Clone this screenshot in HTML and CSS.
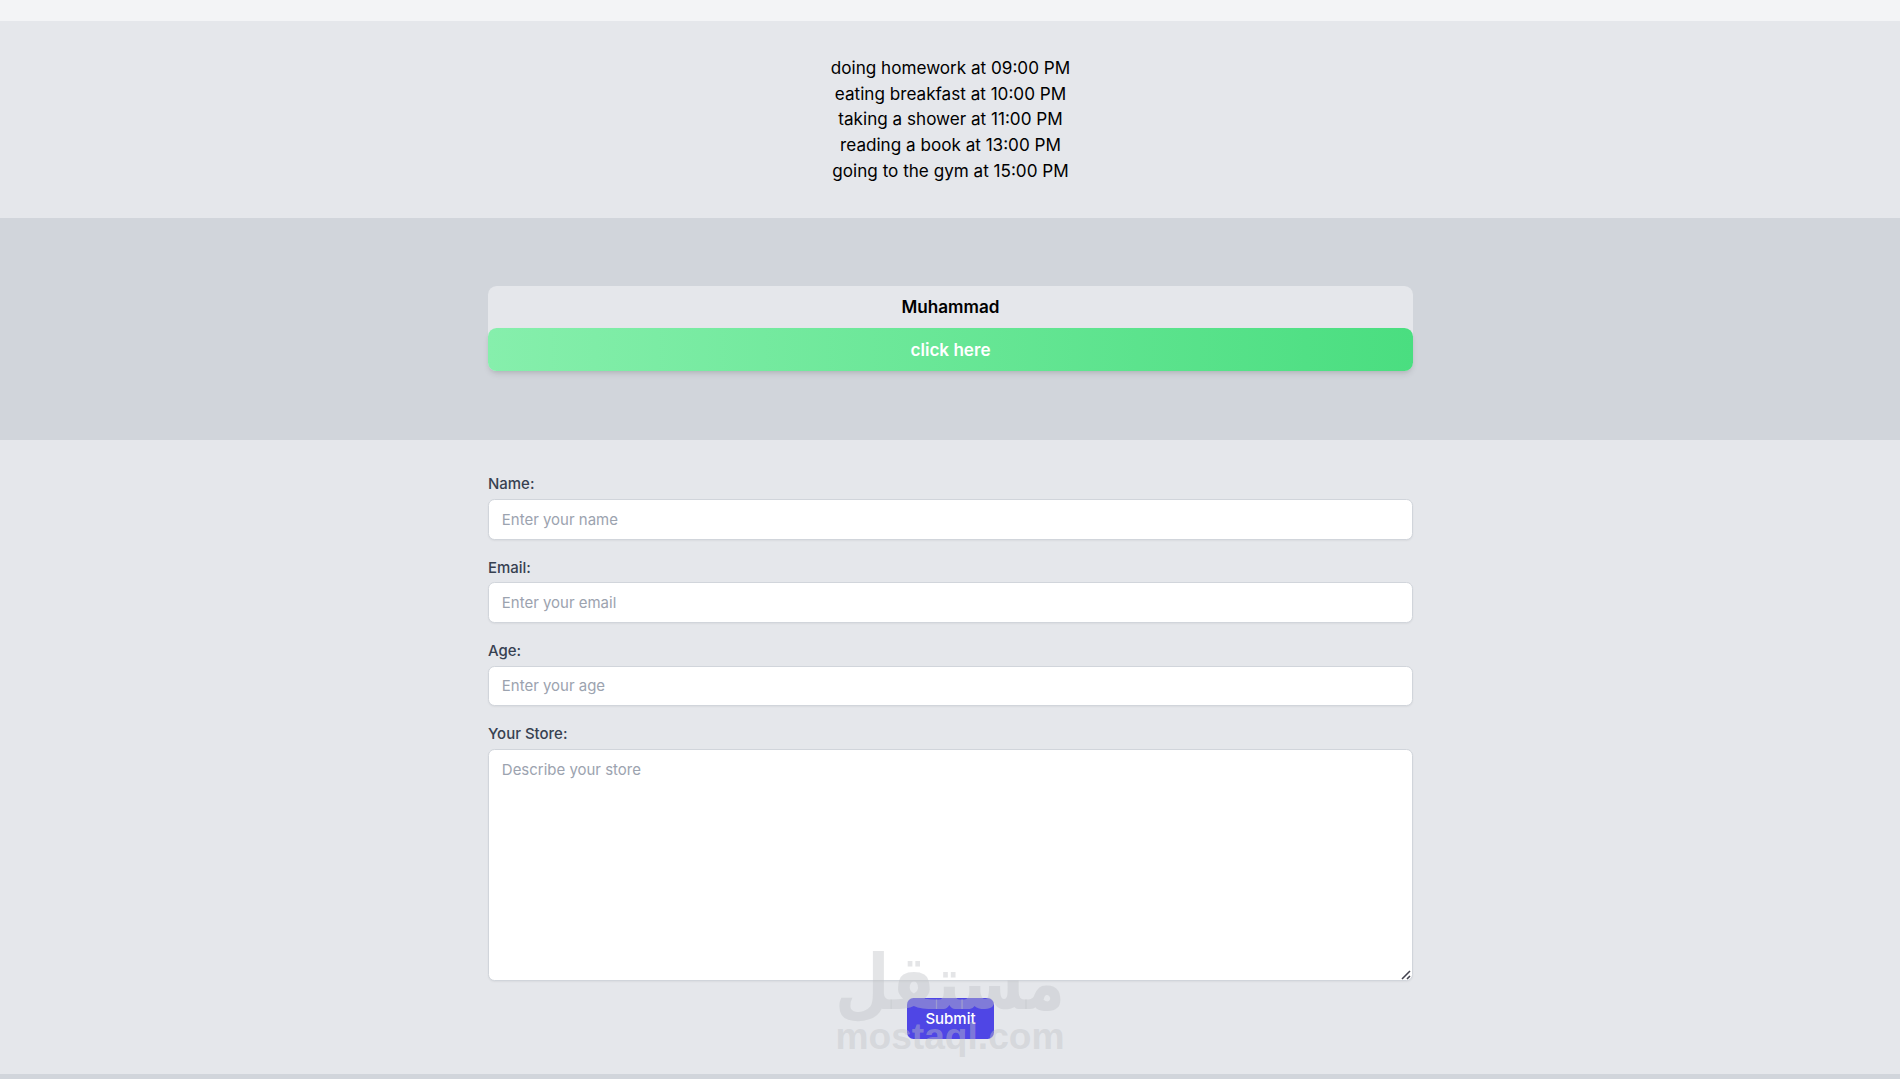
FILE: index.html
```
<!DOCTYPE html>
<html lang="en">
<head>
  <meta charset="UTF-8" />
  <meta name="viewport" content="width=device-width, initial-scale=1" />
  <title>My Store</title>
  <link rel="stylesheet" href="styles.css">
</head>
<body>
  <!-- Daily tasks -->
  <section class="tasks">
    <p>doing homework at 09:00 PM</p>
    <p>eating breakfast at 10:00 PM</p>
    <p>taking a shower at 11:00 PM</p>
    <p>reading a book at 13:00 PM</p>
    <p>going to the gym at 15:00 PM</p>
  </section>

  <!-- User card -->
  <section class="user">
    <div class="container">
      <div class="card">
        <h2>Muhammad</h2>
        <button class="click-btn" type="button">click here</button>
      </div>
    </div>
  </section>

  <!-- Store form -->
  <section class="store">
    <form class="container">
      <div class="field">
        <label for="name">Name:</label>
        <input type="text" id="name" placeholder="Enter your name" />
      </div>
      <div class="field">
        <label for="email">Email:</label>
        <input type="email" id="email" placeholder="Enter your email" />
      </div>
      <div class="field">
        <label for="age">Age:</label>
        <input type="number" id="age" placeholder="Enter your age" />
      </div>
      <div class="field">
        <label for="store">Your Store:</label>
        <textarea id="store" placeholder="Describe your store"></textarea>
        <svg class="grip" width="10" height="10" viewBox="0 0 10 10">
          <path d="M1 9 L9 1 M6 9 L9 6" />
        </svg>
      </div>
      <button class="submit-btn" type="submit">Submit</button>
    </form>

    <svg class="watermark" width="240" height="130" viewBox="0 0 240 130">
      <text class="mark-ar" x="120" y="71" text-anchor="middle" textLength="230" lengthAdjust="spacingAndGlyphs" direction="rtl">مستقل</text>
      <text class="mark-en" x="120" y="111" text-anchor="middle" textLength="229" lengthAdjust="spacingAndGlyphs">mostaql.com</text>
    </svg>
  </section>
</body>
</html>
```
FILE: styles.css
```
* {
  box-sizing: border-box;
  margin: 0;
  padding: 0;
}

html {
  font-size: 17.13px;
}

body {
  height: 100vh;
  overflow: hidden;
  padding-top: 20.6px;
  font-family: Inter, sans-serif;
  line-height: 1.5;
  color: #000;
  background: linear-gradient(#f3f4f6 50%, #d1d5db 50%);
}

section {
  padding-left: 1px;
}

.container {
  width: 54rem;
  margin: 0 auto;
}

.tasks {
  padding-top: 2rem;
  padding-bottom: 2rem;
  text-align: center;
  background-color: #e5e7eb;
}

.user {
  padding-top: 3.97rem;
  padding-bottom: 4rem;
  background-color: #d1d5db;
}

.card {
  border-radius: 0.5rem;
  background-color: #e5e7eb;
}

.card h2 {
  padding: 0.5rem;
  font-size: 1rem;
  font-weight: 600;
  text-align: center;
}

.click-btn {
  display: block;
  width: 100%;
  padding: 0.5rem;
  border: none;
  border-radius: 0.5rem;
  font: inherit;
  font-weight: 600;
  color: #fff;
  cursor: pointer;
  background: linear-gradient(to right, #86efac, #4ade80);
  box-shadow: 0 4px 6px -1px rgba(0, 0, 0, 0.1), 0 2px 4px -2px rgba(0, 0, 0, 0.1);
}

.store {
  position: relative;
  padding-top: 1.97rem;
  padding-bottom: 2.04rem;
  background-color: #e5e7eb;
}

.field {
  position: relative;
  margin-bottom: 1rem;
}

label {
  display: block;
  margin-bottom: 0.25rem;
  font-size: 0.875rem;
  font-weight: 500;
  line-height: 1.25rem;
  color: #374151;
}

input,
textarea {
  display: block;
  width: 100%;
  padding: 0.5rem 0.75rem;
  border: 1px solid #d1d5db;
  border-radius: 0.375rem;
  font-family: inherit;
  font-size: 0.875rem;
  line-height: 1.25rem;
  background-color: #fff;
  box-shadow: 0 1px 2px rgba(0, 0, 0, 0.05);
}

textarea {
  height: 232px;
  resize: vertical;
}

textarea::-webkit-resizer {
  background: transparent;
}

input::placeholder,
textarea::placeholder {
  color: #9ca3af;
}

.grip {
  position: absolute;
  right: 2px;
  bottom: 1px;
  pointer-events: none;
  fill: none;
  stroke: #42424e;
  stroke-width: 1.6;
}

.submit-btn {
  display: block;
  margin: 0 auto;
  padding: 0.5rem 1rem;
  border: 1px solid transparent;
  border-radius: 0.375rem;
  font-family: inherit;
  font-size: 0.875rem;
  font-weight: 500;
  line-height: 1.25rem;
  color: #fff;
  cursor: pointer;
  background-color: #4f46e5;
}

.watermark {
  position: absolute;
  left: calc(50% - 120px);
  bottom: 6px;
  overflow: visible;
  pointer-events: none;
  fill: rgba(193, 195, 200, 0.43);
}

.mark-ar {
  font-family: "DejaVu Sans", sans-serif;
  font-size: 76px;
  font-weight: bold;
}

.mark-en {
  font-family: "Liberation Sans", sans-serif;
  font-size: 37px;
  font-weight: bold;
}
```
